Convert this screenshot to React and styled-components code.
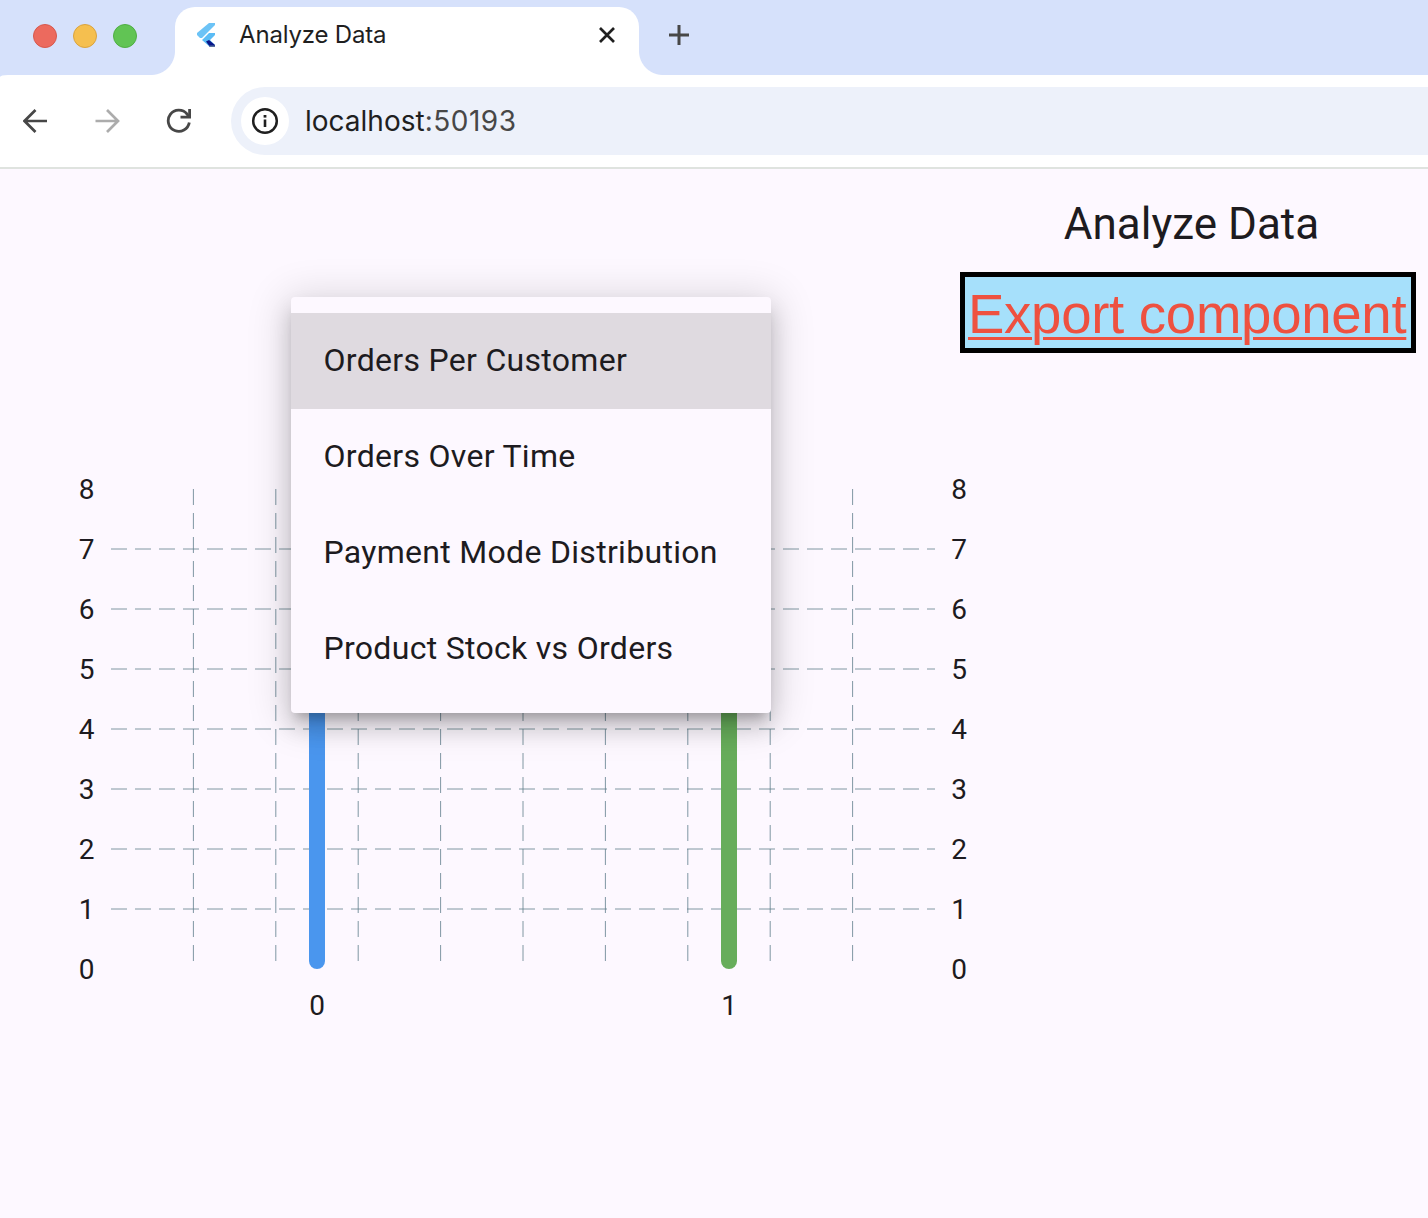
import React from 'react';
import styled, { createGlobalStyle } from 'styled-components';

const Global = createGlobalStyle`
  * { box-sizing: border-box; }
  body { margin: 0; background: #fdf8ff; overflow: hidden; }
`;

const Window = styled.div`
  display: flex;
  flex-direction: column;
  width: 1428px;
  height: 1218px;
  overflow: hidden;
  background: #d6e1fb;
  color: #1d1b20;
  font-family: Roboto, "Liberation Sans", sans-serif;
`;

const TabStrip = styled.header`
  display: flex;
  align-items: flex-end;
  height: 75px;
  flex: none;
  background: #d6e1fb;
`;

const WindowControls = styled.div`
  display: flex;
  gap: 16px;
  width: 175px;
  height: 75px;
  padding: 24px 0 0 33px;
`;

const ControlDot = styled.span`
  width: 24px;
  height: 24px;
  border-radius: 50%;
  background: ${(p) => p.$fill};
  border: 1px solid ${(p) => p.$ring};
`;

const Tab = styled.div`
  position: relative;
  display: flex;
  align-items: center;
  width: 464px;
  height: 68px;
  padding: 0 22px 12px 20px;
  background: #fff;
  border-radius: 20px 20px 0 0;

  &::before,
  &::after {
    content: "";
    position: absolute;
    bottom: 0;
    width: 24px;
    height: 24px;
  }
  &::before {
    left: -24px;
    background: radial-gradient(circle at 0 0, transparent 23.5px, #fff 24.5px);
  }
  &::after {
    right: -24px;
    background: radial-gradient(circle at 100% 0, transparent 23.5px, #fff 24.5px);
  }
`;

const TabTitle = styled.span`
  flex: 1;
  margin-left: 22px;
  font: 400 24px/30px Inter, sans-serif;
  letter-spacing: -0.18px;
  color: #1f1f1f;
  white-space: nowrap;
`;

const NewTab = styled.div`
  display: flex;
  align-items: center;
  height: 68px;
  padding: 0 0 12px 29px;
`;

const Toolbar = styled.nav`
  display: flex;
  align-items: center;
  height: 94px;
  flex: none;
  padding: 0 0 0 23px;
  background: #fff;
  border-bottom: 2px solid #dfe3df;
  border-top-left-radius: 8px 2px;
`;

const NavIcons = styled.div`
  display: flex;
  gap: 45.5px;
  width: 208px;
`;

const AddressBar = styled.div`
  display: flex;
  align-items: center;
  flex: 1;
  height: 68px;
  padding-left: 10px;
  border-radius: 34px 0 0 34px;
  background: #edf1fa;
`;

const SiteInfo = styled.span`
  display: flex;
  align-items: center;
  justify-content: center;
  width: 48px;
  height: 48px;
  border-radius: 50%;
  background: #fff;
`;

const Address = styled.span`
  margin-left: 16px;
  font: 400 28px/36px Inter, sans-serif;
  color: #1f1f1f;
`;

const Port = styled.span`
  letter-spacing: 0.5px;
  color: #474747;
`;

const Page = styled.main`
  position: relative;
  display: flex;
  flex: 1;
  background: #fdf8ff;
`;

const Chart = styled.section`
  display: grid;
  grid-template-columns: 31px 824px 32px;
  grid-template-rows: 540px 40px;
  column-gap: 8px;
  align-content: start;
  width: 953px;
  flex: none;
  padding: 290px 0 0 72px;
`;

const Axis = styled.div`
  display: flex;
  flex-direction: column;
  margin-left: ${(p) => p.$shift || 0}px;
`;

const Tick = styled.span`
  display: flex;
  flex: 1;
  align-items: center;
  justify-content: center;
  padding-top: 2px;
  font-size: 28px;
  line-height: 40px;
`;

const Plot = styled.svg`
  display: block;
  margin-top: 30px;
`;

const BottomAxis = styled.div`
  grid-column: 2;
  display: flex;
  margin-top: -14px;
  height: 40px;
`;

const SidePanel = styled.aside`
  display: flex;
  flex-direction: column;
  align-items: flex-start;
  width: 475px;
  padding: 25px 0 0 7px;
`;

const Heading = styled.h1`
  width: 463px;
  margin: 0;
  font-size: 44px;
  font-weight: 400;
  line-height: 60px;
  text-align: center;
`;

const ExportLabel = styled.div`
  width: 456px;
  height: 81px;
  margin-top: 18px;
  padding-left: 3px;
  border: 5px solid #000;
  background: #a6e0fb;
  color: #ee5140;
  font: 400 54.6px/76px "Liberation Sans", Arial, sans-serif;
  letter-spacing: -0.3px;
  text-decoration: underline;
  text-decoration-thickness: 3px;
  text-underline-offset: 4px;
  white-space: nowrap;
`;

const Menu = styled.ul`
  position: absolute;
  left: 291px;
  top: 128px;
  width: 480px;
  height: 416px;
  margin: 0;
  padding: 16px 0;
  list-style: none;
  border-radius: 4px;
  background: #fdf8ff;
  box-shadow: 0 10px 10px -6px rgba(0, 0, 0, 0.2), 0 14px 22px 1px rgba(0, 0, 0, 0.14),
    0 5px 40px 6px rgba(0, 0, 0, 0.14);
`;

const MenuItem = styled.li`
  height: 96px;
  padding: 0 32.5px;
  font-size: 32px;
  line-height: 95px;
  letter-spacing: 0.3px;
  white-space: nowrap;
  background: ${(p) => (p.$selected ? '#dfdae0' : 'transparent')};
`;

const FlutterLogo = () => (
  <svg width="22" height="26" viewBox="0 0 22 26">
    <path d="M14 1h6v2L7 16H5l-3-3v-2z" fill="#6cc3f6" />
    <path d="M14 11h6v2l-5 5 5 5v2h-5l-8-7z" fill="#5bbcf5" />
    <path d="M11 19.500l3-1.500 6 5v2h-5z" fill="#08168a" />
    <path d="M14 23.500h6V25h-5z" fill="#58709c" />
  </svg>
);

const CloseIcon = () => (
  <svg width="20" height="20" viewBox="0 0 20 20" stroke="#1f1f1f" strokeWidth="2.7">
    <path d="M3 3l14 14M17 3L3 17" />
  </svg>
);

const PlusIcon = () => (
  <svg width="22" height="22" viewBox="0 0 22 22" stroke="#474747" strokeWidth="3">
    <path d="M1 11h20M11 1v20" />
  </svg>
);

const ArrowIcon = ({ color, forward }) => (
  <svg width="26" height="26" viewBox="0 0 26 26" fill="none" stroke={color} strokeWidth="2.7">
    <path d={forward ? 'M0.500 13H23M12 2L23 13L12 24' : 'M24 13H2M12.500 2L1.500 13L12.500 24'} />
  </svg>
);

const ReloadIcon = () => (
  <svg width="26" height="26" viewBox="0 0 26 26" fill="none" stroke="#474747" strokeWidth="2.800">
    <path d="M23.300 14.500A10.600 10.600 0 1 1 21 6L23 9" />
    <path d="M23.600 1V9.200H14.500" />
  </svg>
);

const InfoIcon = () => (
  <svg width="28" height="28" viewBox="0 0 28 28" fill="none" stroke="#1f1f1f">
    <circle cx="14" cy="14" r="11.800" strokeWidth="2.500" />
    <path d="M14 12.500v7.500" strokeWidth="2.600" />
    <path d="M14 8v2.600" strokeWidth="2.800" />
  </svg>
);

const levels = [8, 7, 6, 5, 4, 3, 2, 1, 0];
const bars = [
  { label: '0', x: 198, color: '#4a96ee' },
  { label: '1', x: 610, color: '#67ad5b' },
];
const options = [
  'Orders Per Customer',
  'Orders Over Time',
  'Payment Mode Distribution',
  'Product Stock vs Orders',
];

const ValueAxis = ({ shift }) => (
  <Axis $shift={shift}>
    {levels.map((n) => (
      <Tick key={n}>{n}</Tick>
    ))}
  </Axis>
);

export default function App() {
  return (
    <Window>
      <Global />
      <TabStrip>
        <WindowControls>
          <ControlDot $fill="#ec6a5e" $ring="#d6584d" />
          <ControlDot $fill="#f5bf4f" $ring="#d9a33f" />
          <ControlDot $fill="#61c454" $ring="#4fae43" />
        </WindowControls>
        <Tab>
          <FlutterLogo />
          <TabTitle>Analyze Data</TabTitle>
          <CloseIcon />
        </Tab>
        <NewTab>
          <PlusIcon />
        </NewTab>
      </TabStrip>
      <Toolbar>
        <NavIcons>
          <ArrowIcon color="#474747" />
          <ArrowIcon color="#acacac" forward />
          <ReloadIcon />
        </NavIcons>
        <AddressBar>
          <SiteInfo>
            <InfoIcon />
          </SiteInfo>
          <Address>
            localhost<Port>:50193</Port>
          </Address>
        </AddressBar>
      </Toolbar>
      <Page>
        <Chart>
          <ValueAxis shift={-2} />
          <Plot width="824" height="480" viewBox="0 0 824 480">
            <g stroke="#607d8b" strokeWidth="0.8" strokeDasharray="16 8">
              {[1, 2, 3, 4, 5, 6, 7, 8, 9].map((i) => (
                <path key={i} d={`M${i * 82.4} 0V480`} />
              ))}
              {[1, 2, 3, 4, 5, 6, 7].map((i) => (
                <path key={i} d={`M0 ${i * 60}H824`} />
              ))}
            </g>
            {bars.map((b) => (
              <rect key={b.label} x={b.x} y="60" width="16" height="420" rx="8" fill={b.color} />
            ))}
          </Plot>
          <ValueAxis />
          <BottomAxis>
            {bars.map((b) => (
              <Tick key={b.label}>{b.label}</Tick>
            ))}
          </BottomAxis>
        </Chart>
        <SidePanel>
          <Heading>Analyze Data</Heading>
          <ExportLabel>Export component</ExportLabel>
        </SidePanel>
        <Menu>
          {options.map((o, i) => (
            <MenuItem key={o} $selected={i === 0}>
              {o}
            </MenuItem>
          ))}
        </Menu>
      </Page>
    </Window>
  );
}
